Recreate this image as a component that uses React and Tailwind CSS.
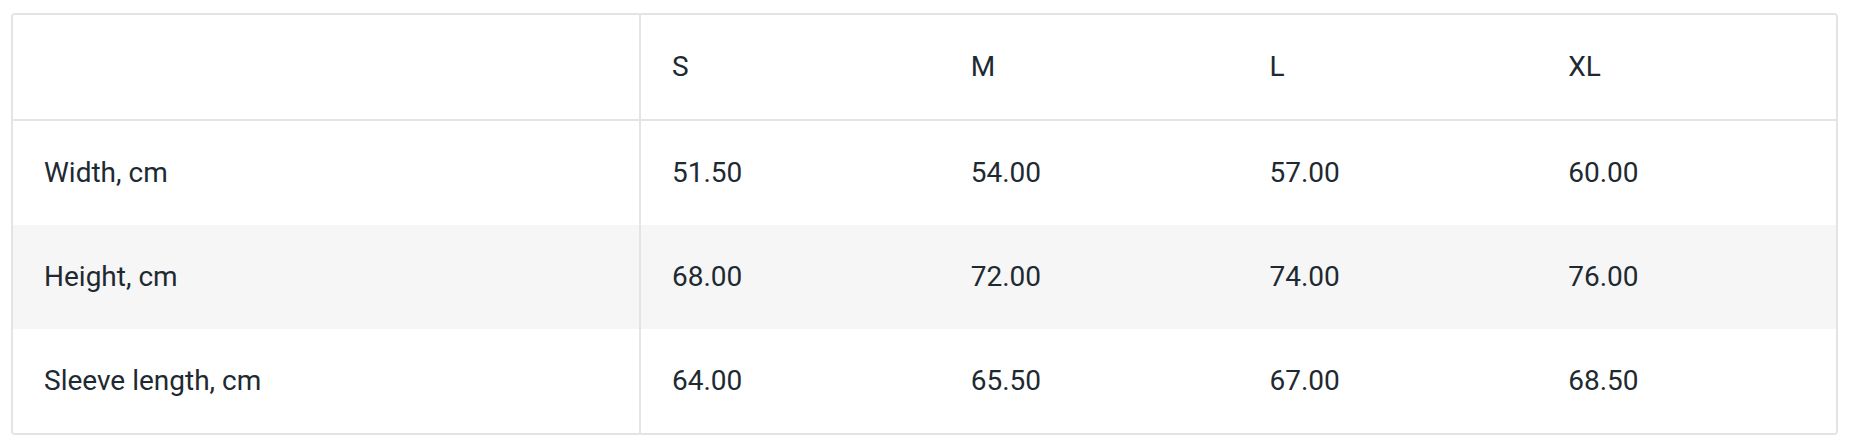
import React from "react";

const sizes = ["S", "M", "L", "XL"];
const rows = [
  { label: "Width, cm", values: ["51.50", "54.00", "57.00", "60.00"] },
  { label: "Height, cm", values: ["68.00", "72.00", "74.00", "76.00"] },
  { label: "Sleeve length, cm", values: ["64.00", "65.50", "67.00", "68.50"] },
];

function Row({ label, values, striped, header }) {
  return (
    <div
      className={
        "grid grid-cols-[628px_1fr_1fr_1fr_1fr] " +
        (header ? "border-b-2 border-[#e4e4e4] " : "") +
        (striped ? "bg-[#f6f6f6]" : "bg-white")
      }
    >
      <div className="h-[104px] flex items-center pl-[31px] border-r-2 border-[#e4e4e4]">
        {label}
      </div>
      {values.map((v, i) => (
        <div key={i} className="h-[104px] flex items-center pl-[31px]">
          {v}
        </div>
      ))}
    </div>
  );
}

export default function App() {
  return (
    <div className="bg-white w-[1854px] h-[448px] pt-[13px] pl-[11px]">
      <div
        className="w-[1827px] border-2 border-[#e4e4e4] rounded-[4px] overflow-hidden text-[28px] leading-none text-[#1e2a32]"
        style={{ fontFamily: "Roboto, 'Liberation Sans', sans-serif" }}
      >
        <Row label="" values={sizes} header />
        {rows.map((r, i) => (
          <Row key={r.label} label={r.label} values={r.values} striped={i === 1} />
        ))}
      </div>
    </div>
  );
}
